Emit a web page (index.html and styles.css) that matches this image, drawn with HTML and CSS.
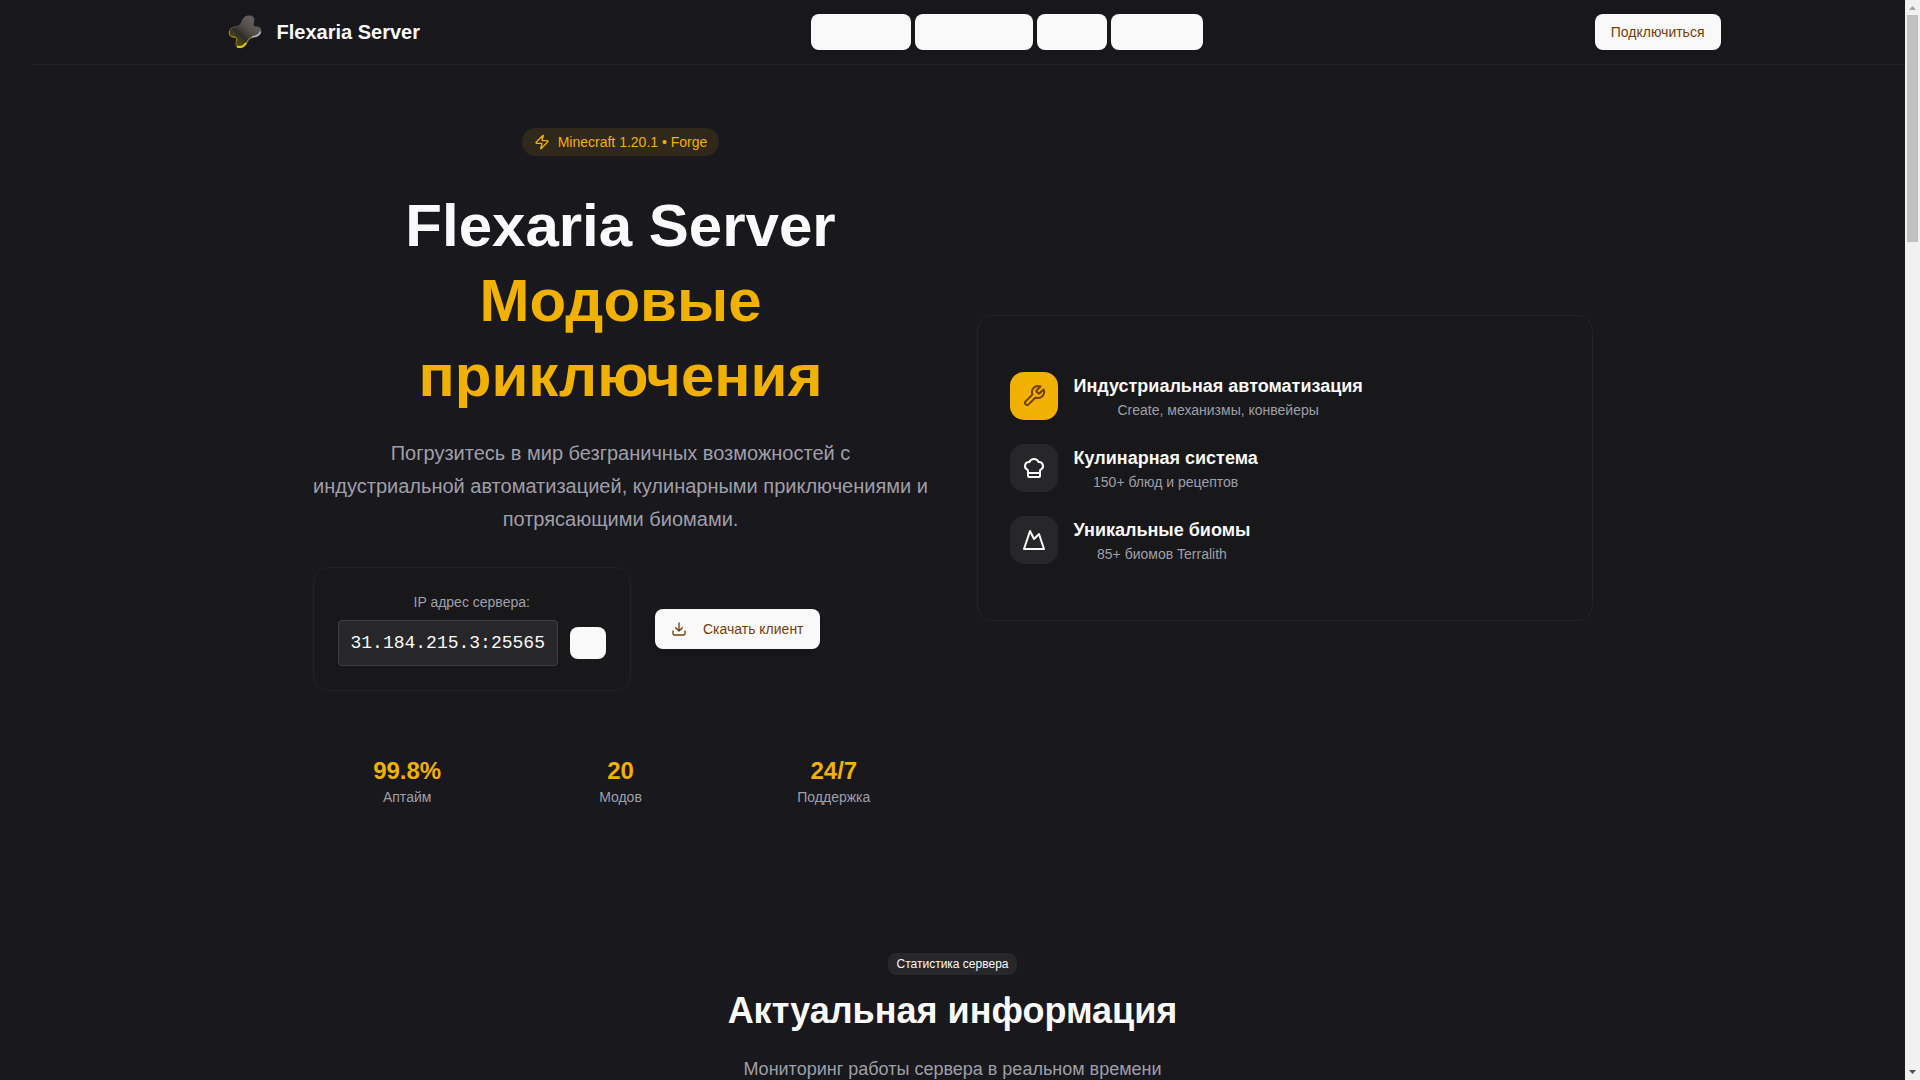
FILE: index.html
```
<!DOCTYPE html>
<html lang="ru">
<head>
    <meta charset="UTF-8">
    <meta name="viewport" content="width=device-width, initial-scale=1.0">
    <title>Flexaria Server</title>
    <link rel="stylesheet" href="styles.css">
</head>
<body>
    <div class="page">
        <header class="header">
            <div class="header-inner">
                <a class="brand" href="#home">
                    <svg class="logo" viewBox="-8 -4 48 48" aria-hidden="true">
                        <defs>
                            <linearGradient id="logo-fill" x1="0.8" y1="0.2" x2="0.3" y2="0.8">
                                <stop offset="0" stop-color="#625b59"/>
                                <stop offset="0.4" stop-color="#544d4a"/>
                                <stop offset="0.75" stop-color="#2e2c28"/>
                                <stop offset="1" stop-color="#4a4418"/>
                            </linearGradient>
                            <linearGradient id="logo-edge" x1="1" y1="0" x2="0.2" y2="1">
                                <stop offset="0" stop-color="#6a6c70"/>
                                <stop offset="0.5" stop-color="#55504a"/>
                                <stop offset="1" stop-color="#8f7f12"/>
                            </linearGradient>
                        </defs>
                        <path d="M17 9.500C18.500 5 21 4 24.500 4C28.500 4 29.500 6.500 28.500 10C27.500 14 29 15 32 15C35.500 15 36.500 18 35.500 21C34 25 30 24.500 27 25.500C23.500 27 23 29.500 21 32.500C19 35.500 17 36 14 35.500C10.500 35 10.500 32 11.500 29C12.500 26 10.500 25 8 25C4 24.500 4 21 4.500 18.500C5.500 15.500 9 15 12 14.500C15 13.500 16 12 17 9.500Z" fill="url(#logo-fill)" stroke="url(#logo-edge)" stroke-width="1"/>
                        <path d="M12 34.500C16 36 19 34 21 31" fill="none" stroke="#e3cb08" stroke-width="2"/>
                        <path d="M21 31C22.500 28 24 26 27 25.500" fill="none" stroke="#9a8614" stroke-width="1"/>
                        <path d="M27 25C31 24.500 34.500 23.500 35.500 19.500" fill="none" stroke="#b4b6be" stroke-width="1.500"/>
                        <path d="M4.500 19C4 23 5 24.500 9 25C12 25.500 12 27 11.500 29" fill="none" stroke="#a8940c" stroke-width="1"/>
                    </svg>
                    <span>Flexaria Server</span>
                </a>
                <nav class="nav">
                    <button class="btn btn-ghost" type="button">О сервере</button>
                    <button class="btn btn-ghost" type="button">Особенности</button>
                    <button class="btn btn-ghost" type="button">Моды</button>
                    <button class="btn btn-ghost" type="button">Контакты</button>
                </nav>
                <button class="btn" type="button">Подключиться</button>
            </div>
        </header>

        <main>
            <section class="hero">
                <div class="hero-text">
                    <div class="version">
                        <svg class="icon" viewBox="0 0 24 24" aria-hidden="true"><path d="M4 14a1 1 0 0 1-.78-1.630l9.900-10.200a.5.5 0 0 1 .86.460l-1.920 6.020A1 1 0 0 0 13 10h7a1 1 0 0 1 .78 1.630l-9.900 10.200a.5.5 0 0 1-.86-.460l1.920-6.020A1 1 0 0 0 11 14z"/></svg>
                        <span>Minecraft 1.20.1 • Forge</span>
                    </div>
                    <h1>Flexaria Server <span>Модовые приключения</span></h1>
                    <p class="lead">Погрузитесь в мир безграничных возможностей с индустриальной автоматизацией, кулинарными приключениями и потрясающими биомами.</p>

                    <div class="connect">
                        <div class="card ip-card">
                            <p class="muted">IP адрес сервера:</p>
                            <div class="ip-row">
                                <code>31.184.215.3:25565</code>
                                <button class="btn copy" type="button" aria-label="Скопировать"></button>
                            </div>
                        </div>
                        <button class="btn download" type="button">
                            <svg class="icon" viewBox="0 0 24 24" aria-hidden="true"><path d="M12 15V3M21 15v4a2 2 0 0 1-2 2H5a2 2 0 0 1-2-2v-4M7 10l5 5 5-5"/></svg>
                            Скачать клиент
                        </button>
                    </div>

                    <div class="stats">
                        <div><strong>99.8%</strong><span class="muted">Аптайм</span></div>
                        <div><strong>20</strong><span class="muted">Модов</span></div>
                        <div><strong>24/7</strong><span class="muted">Поддержка</span></div>
                    </div>
                </div>

                <div class="card features">
                    <div class="feature">
                        <div class="feature-icon accent">
                            <svg viewBox="0 0 24 24" aria-hidden="true"><path d="M14.700 6.300a1 1 0 0 0 0 1.400l1.600 1.600a1 1 0 0 0 1.400 0l3.770-3.770a6 6 0 0 1-7.940 7.940l-6.910 6.910a2.120 2.120 0 0 1-3-3l6.910-6.910a6 6 0 0 1 7.940-7.940l-3.760 3.760z"/></svg>
                        </div>
                        <div>
                            <h3>Индустриальная автоматизация</h3>
                            <p class="muted">Create, механизмы, конвейеры</p>
                        </div>
                    </div>
                    <div class="feature">
                        <div class="feature-icon">
                            <svg viewBox="0 0 24 24" aria-hidden="true"><path d="M17 21a1 1 0 0 0 1-1v-5.350c0-.457.316-.844.727-1.041a4 4 0 0 0-2.134-7.589 5 5 0 0 0-9.186 0 4 4 0 0 0-2.134 7.588c.411.198.727.585.727 1.041V20a1 1 0 0 0 1 1ZM6 17h12"/></svg>
                        </div>
                        <div>
                            <h3>Кулинарная система</h3>
                            <p class="muted">150+ блюд и рецептов</p>
                        </div>
                    </div>
                    <div class="feature">
                        <div class="feature-icon">
                            <svg viewBox="0 0 24 24" aria-hidden="true"><path d="m8 3 4 8 5-5 5 15H2L8 3z"/></svg>
                        </div>
                        <div>
                            <h3>Уникальные биомы</h3>
                            <p class="muted">85+ биомов Terralith</p>
                        </div>
                    </div>
                </div>
            </section>

            <section class="status">
                <span class="badge">Статистика сервера</span>
                <h2>Актуальная информация</h2>
                <p>Мониторинг работы сервера в реальном времени</p>
            </section>
        </main>
    </div>

    <div class="scrollbar" aria-hidden="true">
        <svg viewBox="0 0 15 15"><path d="M4 10h7L7.500 6z" fill="#a3a3a3"/></svg>
        <div class="thumb"></div>
        <svg viewBox="0 0 15 15"><path d="M4 5h7L7.500 9z" fill="#505050"/></svg>
    </div>
</body>
</html>
```
FILE: styles.css
```
* {
    box-sizing: border-box;
}
body {
    display: flex;
    height: 100vh;
    margin: 0;
    overflow: hidden;
    background-color: #19181c;
    color: #fafafa;
    font-family: "Liberation Sans", Arial, sans-serif;
    font-size: 16px;
    line-height: 24px;
}
h1, h2, h3, p {
    margin: 0;
}
.page {
    flex: 1;
    overflow: hidden;
}
.header {
    margin-left: 32px;
    border-bottom: 1px solid #232327;
    background-color: #18171b;
}
.header-inner {
    display: flex;
    align-items: center;
    justify-content: space-between;
    max-width: 1536px;
    height: 64px;
    margin: 0 auto;
    padding: 0 16px;
}
.brand {
    display: flex;
    align-items: center;
    gap: 12px;
    color: #fafafa;
    font-size: 20px;
    font-weight: bold;
    text-decoration: none;
}
.logo {
    width: 48px;
    height: 48px;
}
.nav {
    display: flex;
    gap: 4px;
}
.btn {
    height: 36px;
    padding: 0 16px;
    border: 0;
    border-radius: 8px;
    background-color: #f9f9f9;
    color: #733e0a;
    font-family: inherit;
    font-size: 14px;
    cursor: pointer;
}
.btn-ghost {
    color: #f9f9f9;
}
.icon {
    width: 16px;
    height: 16px;
}
.icon, .feature-icon svg {
    fill: none;
    stroke: currentColor;
    stroke-width: 2;
    stroke-linecap: round;
    stroke-linejoin: round;
}
.muted {
    color: #9f9fa9;
    font-size: 14px;
    line-height: 20px;
}
.card {
    border: 1px solid #232326;
    border-radius: 16px;
    background-color: #18181a;
}

/* hero */
.hero {
    display: grid;
    grid-template-columns: 1fr 1fr;
    align-items: center;
    gap: 48px;
    max-width: 1280px;
    margin: 0 auto;
    padding: 63px 0 80px;
    text-align: center;
}
.version {
    display: inline-flex;
    align-items: center;
    gap: 8px;
    height: 28px;
    margin-bottom: 32px;
    padding: 0 12px;
    border-radius: 14px;
    background-color: #2f281b;
    color: #f0b100;
    font-size: 14px;
}
h1 {
    margin-bottom: 24px;
    font-size: 60px;
    line-height: 75px;
}
h1 span {
    display: block;
    color: #f0b100;
}
.lead {
    margin-bottom: 31px;
    color: #9f9fa9;
    font-size: 20px;
    line-height: 33px;
}
.connect {
    display: flex;
    align-items: center;
    gap: 24px;
    margin-bottom: 64px;
}
.ip-card {
    padding: 24px;
}
.ip-card .muted {
    margin-bottom: 8px;
}
.ip-row {
    display: flex;
    align-items: center;
    gap: 12px;
}
code {
    padding: 8px 12px;
    border: 1px solid #3f3f42;
    border-radius: 4px;
    background-color: #27272a;
    font-family: "Liberation Mono", monospace;
    font-size: 18px;
    line-height: 28px;
}
.copy {
    width: 36px;
    height: 32px;
    padding: 0;
}
.download {
    display: flex;
    align-items: center;
    gap: 16px;
    height: 40px;
    box-shadow: 0 10px 15px -3px rgba(0, 0, 0, 0.1), 0 4px 6px -4px rgba(0, 0, 0, 0.1);
}
.stats {
    display: grid;
    grid-template-columns: repeat(3, 1fr);
    gap: 24px;
}
.stats strong {
    display: block;
    color: #f0b100;
    font-size: 24px;
    line-height: 32px;
}
.stats .muted {
    display: block;
}
.features {
    display: flex;
    flex-direction: column;
    gap: 24px;
    padding: 56px 32px;
}
.feature {
    display: flex;
    align-items: center;
    gap: 16px;
}
.feature-icon {
    display: flex;
    align-items: center;
    justify-content: center;
    width: 48px;
    height: 48px;
    border-radius: 14px;
    background-color: #27272a;
}
.feature-icon svg {
    width: 24px;
    height: 24px;
}
.feature-icon.accent {
    background-color: #f0b100;
    color: #733e0a;
}
h3 {
    font-size: 18px;
    line-height: 28px;
}

/* server status */
.status {
    padding: 64px 16px;
    text-align: center;
}
.badge {
    display: inline-block;
    padding: 3px 9px;
    border-radius: 8px;
    background-color: #27272a;
    font-size: 12px;
    line-height: 16px;
}
h2 {
    margin: 16px 0 24px;
    font-size: 36px;
    line-height: 40px;
}
.status p {
    color: #9f9fa9;
    font-size: 18px;
    line-height: 28px;
}

.scrollbar {
    display: flex;
    flex-direction: column;
    width: 15px;
    background-color: #f1f1f1;
}
.scrollbar svg {
    width: 15px;
    height: 15px;
}
.thumb {
    height: 21%;
    margin: 0 2px auto;
    background-color: #c1c1c1;
}
```
